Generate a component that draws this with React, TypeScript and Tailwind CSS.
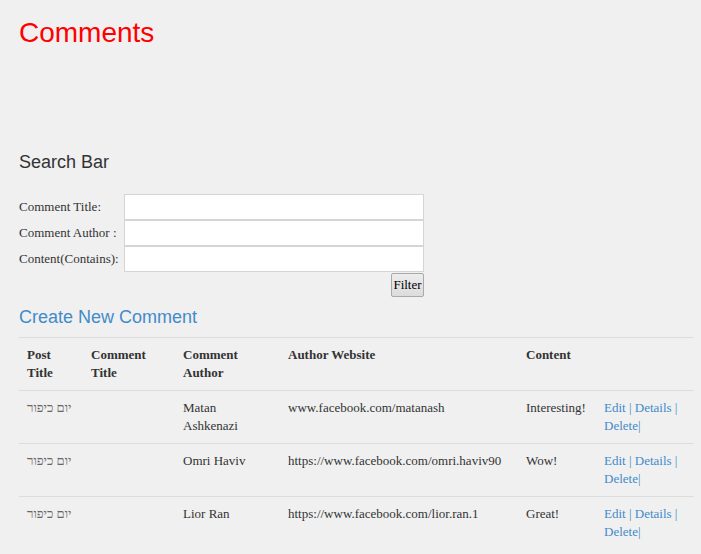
import React from "react";

const rows = [
  { post: "יום כיפור", title: "", author: "Matan Ashkenazi", site: "www.facebook.com/matanash", content: "Interesting!" },
  { post: "יום כיפור", title: "", author: "Omri Haviv", site: "https://www.facebook.com/omri.haviv90", content: "Wow!" },
  { post: "יום כיפור", title: "", author: "Lior Ran", site: "https://www.facebook.com/lior.ran.1", content: "Great!" },
];

const serif = "font-['Liberation_Serif','Times_New_Roman',serif]";
const sans = "font-['Liberation_Sans',Arial,sans-serif]";

function Field({ label }: { label: string }) {
  return (
    <div className="flex h-[26px] items-center">
      <div className="w-[105px] whitespace-nowrap text-[13px] leading-[18px] text-[#333]">{label}</div>
      <input className="h-[26px] w-[300px] border border-[#d5d5d5] bg-white outline-none" />
    </div>
  );
}

export default function App() {
  return (
    <div className={`min-h-[554px] w-full bg-[#f0f0f0] pl-[19px] ${serif} text-[#333]`}>
      <div className="pt-[17px]">
        <h1 className={`${sans} text-[28px] leading-[31px] text-[#ff0000]`}>Comments</h1>
      </div>
      <h3 className={`${sans} mt-[104px] text-[18px] leading-[20px] text-[#333]`}>Search Bar</h3>
      <div className="mt-[22px] flex w-[405px] flex-col">
        <Field label="Comment Title:" />
        <Field label="Comment Author :" />
        <Field label="Content(Contains):" />
        <div className="flex justify-end">
          <button className="mt-[1px] h-[24px] w-[33px] rounded-[2px] border border-[#a9a9a9] bg-gradient-to-b from-[#ededed] to-[#dcdcdc] text-[13px] leading-[18px] text-black">
            Filter
          </button>
        </div>
      </div>
      <a className={`${sans} mt-[10px] block text-[18px] leading-[20px] text-[#428bca]`}>Create New Comment</a>
      <table className="mt-[10px] w-[675px] table-fixed border-collapse text-[13px] leading-[18px]">
        <colgroup>
          <col className="w-[64px]" />
          <col className="w-[92px]" />
          <col className="w-[105px]" />
          <col className="w-[238px]" />
          <col className="w-[78px]" />
          <col className="w-[98px]" />
        </colgroup>
        <thead>
          <tr className="border-t border-[#dddddd]">
            <th className="p-[8px] text-left align-top font-bold">Post Title</th>
            <th className="p-[8px] text-left align-top font-bold">Comment Title</th>
            <th className="p-[8px] text-left align-top font-bold">Comment Author</th>
            <th className="p-[8px] text-left align-top font-bold">Author Website</th>
            <th className="p-[8px] text-left align-top font-bold">Content</th>
            <th className="p-[8px]"></th>
          </tr>
        </thead>
        <tbody>
          {rows.map((r, i) => (
            <tr key={i} className="border-t border-[#dddddd]">
              <td className="p-[8px] align-top text-[#666]">{r.post}</td>
              <td className="p-[8px] align-top">{r.title}</td>
              <td className="p-[8px] align-top">{r.author}</td>
              <td className="p-[8px] align-top whitespace-nowrap">{r.site}</td>
              <td className="p-[8px] align-top whitespace-nowrap">{r.content}</td>
              <td className="p-[8px] align-top text-[#428bca]">
                <a>Edit</a> | <a>Details</a> | <a>Delete</a>|
              </td>
            </tr>
          ))}
        </tbody>
      </table>
    </div>
  );
}
